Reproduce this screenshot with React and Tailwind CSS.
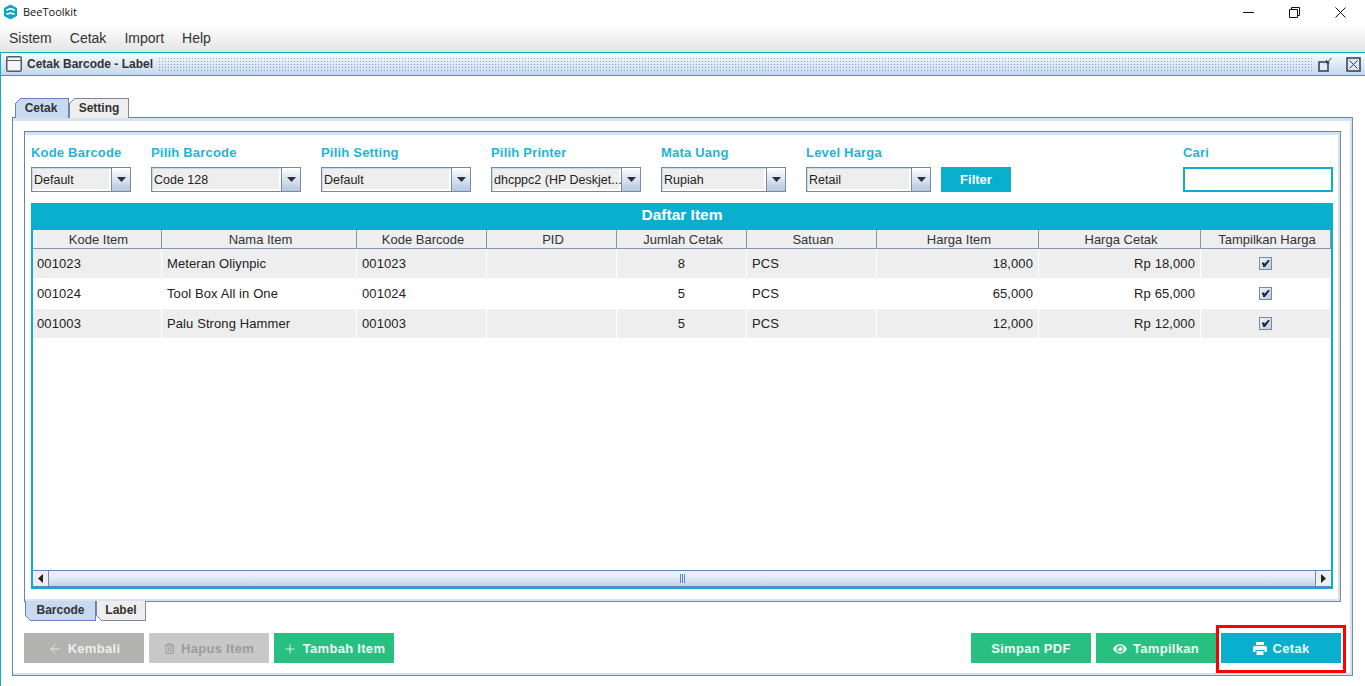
import { ArrowLeft, Plus } from 'lucide-react'
import { FaEye, FaRegTrashAlt } from 'react-icons/fa'

const filters = [
  { label: 'Kode Barcode', value: 'Default', width: 'w-[100px]' },
  { label: 'Pilih Barcode', value: 'Code 128', width: 'w-[150px]' },
  { label: 'Pilih Setting', value: 'Default', width: 'w-[150px]' },
  { label: 'Pilih Printer', value: 'dhcppc2 (HP Deskjet...', width: 'w-[150px]' },
  { label: 'Mata Uang', value: 'Rupiah', width: 'w-[125px]' },
  { label: 'Level Harga', value: 'Retail', width: 'w-[125px]' },
]

const columns = [
  ['Kode Item', 'w-[129px]'],
  ['Nama Item', 'w-[195px]'],
  ['Kode Barcode', 'w-[130px]'],
  ['PID', 'w-[130px]'],
  ['Jumlah Cetak', 'w-[130px]'],
  ['Satuan', 'w-[130px]'],
  ['Harga Item', 'w-[162px]'],
  ['Harga Cetak', 'w-[162px]'],
  ['Tampilkan Harga', 'w-[130px]'],
]

const items = [
  { kode: '001023', nama: 'Meteran Oliynpic', qty: 8, harga: '18,000' },
  { kode: '001024', nama: 'Tool Box All in One', qty: 5, harga: '65,000' },
  { kode: '001003', nama: 'Palu Strong Hammer', qty: 5, harga: '12,000' },
]

function Logo() {
  return (
    <svg width="15" height="16" viewBox="0 0 15 16">
      <path d="M7.5 0.5 L14 4 V12 L7.5 15.5 L1 12 V4 Z" fill="#12a3c4" />
      <path d="M3.5 6.6 C5.5 4.2 9.5 4.2 11.5 6.6" fill="none" stroke="#fff" strokeWidth="1.7" />
      <path d="M3.5 9.2 C5 11 6 9 7.5 9 C9 9 10 11 11.5 9.2" fill="none" stroke="#fff" strokeWidth="1.7" />
    </svg>
  )
}

function Combo({ value, width }) {
  return (
    <div className={`flex h-[25px] ${width} border border-[#7a8a9e]`}>
      <div className="flex-1 min-w-0 pl-[2px] leading-[24px] whitespace-nowrap overflow-hidden bg-[#eeeeee] text-[12.5px] text-[#222] shadow-[inset_1px_1px_0_#c8daee,inset_-2px_-2px_0_#ffffff]">{value}</div>
      <div className="flex w-[19px] items-center justify-center border-l border-[#7a8a9e] bg-gradient-to-b from-white to-[#b4c8e0]">
        <svg width="9" height="5" viewBox="0 0 9 5"><path d="M0 0 H9 L4.5 5 Z" fill="#2f2f3a" /></svg>
      </div>
    </div>
  )
}

function CheckBox() {
  return (
    <div className="mx-auto flex h-[13px] w-[13px] items-center justify-center border border-[#7a8a9e] bg-gradient-to-br from-[#eef3fa] to-[#bccfe6]">
      <svg width="9" height="9" viewBox="0 0 9 9"><path d="M1 3.5 H3.5 V5 L7 1 H8.5 V2 L4 8 H2 V6.5 L1 5 Z" fill="#222a38" /></svg>
    </div>
  )
}

function Tab({ children, active, width, bottom, extra = '' }) {
  const shape = bottom
    ? 'h-[20px] border-t-0 leading-[18px]'
    : 'h-[20px] border-b-0 leading-[19px]'
  const tone = active ? 'bg-[#c8daf0] border-[#6382bf]' : 'bg-[#eeeeee] border-[#7a8a9e]'
  const line = active ? '#6382bf' : '#7a8a9e'
  return (
    <div className={`relative ${width} ${shape} ${tone} ${extra} border text-center text-[12px] font-bold text-[#333]`}>
      {/* cut corner of the tab */}
      <svg width="6" height="6" viewBox="0 0 6 6" className={`absolute -left-px ${bottom ? '-bottom-px' : '-top-px'}`}>
        {bottom
          ? <><path d="M0 0 L6 6 H0 Z" fill="#fff" /><path d="M0 0 L6 6" stroke={line} /></>
          : <><path d="M0 6 L6 0 H0 Z" fill="#fff" /><path d="M0 6 L6 0" stroke={line} /></>}
      </svg>
      {children}
    </div>
  )
}

function ActionButton({ children, color }) {
  return (
    <button className={`flex h-[30px] w-[120px] items-center justify-center gap-[6px] pt-[1px] text-[13px] font-bold tracking-[0.3px] ${color}`}>
      {children}
    </button>
  )
}

function PrintIcon() {
  return (
    <svg width="14" height="13" viewBox="0 0 14 13" fill="currentColor">
      <path d="M3 0 H11 V3 H3 Z" />
      <path d="M1.5 4 H12.5 Q14 4 14 5.5 V10 H11.5 V8 H2.5 V10 H0 V5.5 Q0 4 1.5 4 Z" />
      <path d="M3.5 9 H10.5 V13 H3.5 Z" />
    </svg>
  )
}

export default function App() {
  return (
    <div className="flex h-[686px] w-[1365px] flex-col overflow-hidden bg-white font-['Liberation_Sans',Arial,sans-serif]">
      {/* window title */}
      <div className="flex h-[24px] items-center pl-[3px] pr-[19px]">
        <Logo />
        <span className="ml-[5px] font-['Open_Sans',sans-serif] text-[11px] text-[#111]">BeeToolkit</span>
        <div className="ml-auto flex items-center gap-[35px]">
          <svg width="11" height="11" viewBox="0 0 11 11"><path d="M0 5.5 H11" stroke="#111" /></svg>
          <svg width="11" height="11" viewBox="0 0 11 11" fill="none" stroke="#111"><path d="M0.5 2.5 H8.5 V10.5 H0.5 Z M2.5 2.5 V0.5 H10.5 V8.5 H8.5" /></svg>
          <svg width="11" height="11" viewBox="0 0 11 11" stroke="#111"><path d="M0.5 0.5 L10.5 10.5 M10.5 0.5 L0.5 10.5" /></svg>
        </div>
      </div>

      {/* menu */}
      <div className="flex h-[28px] items-center bg-gradient-to-b from-white to-[#e4e4e4] text-[14px] text-[#333]">
        <span className="ml-[9px]">Sistem</span>
        <span className="ml-[18px]">Cetak</span>
        <span className="ml-[18px]">Import</span>
        <span className="ml-[18px]">Help</span>
      </div>

      {/* internal frame */}
      <div className="flex flex-1 min-h-0 flex-col border-l border-t border-[#0bafce]">
        <div className="flex h-[23px] items-center border-b border-[#6382bf] bg-gradient-to-b from-[#f8fbfe] to-[#c4d7ee] pl-[5px] pr-[4px]">
          <svg width="16" height="16" viewBox="0 0 16 16" fill="none" className="shrink-0">
            <rect x="0.75" y="0.75" width="14.5" height="14.5" rx="1.5" fill="#f4f6fa" stroke="#555a66" strokeWidth="1.5" />
            <path d="M1 4.5 H15" stroke="#555a66" />
          </svg>
          <span className="ml-[5px] whitespace-nowrap text-[12px] font-bold text-[#333]">Cetak Barcode - Label</span>
          <div className="ml-[5px] h-[15px] flex-1 bg-[radial-gradient(#8ba3cc_0.8px,transparent_0.9px)] bg-[length:3px_3px]" />
          <div className="ml-[6px] flex items-center gap-[13px]">
            <svg width="15" height="15" viewBox="0 0 15 15" fill="none" stroke="#333a4d">
              <rect x="1" y="5" width="9" height="9" fill="#dfe8f4" strokeWidth="1.5" />
              <path d="M13.5 1 L8.5 6 M8.5 3 V6 H11.5" />
            </svg>
            <svg width="15" height="15" viewBox="0 0 15 15" fill="#dfe8f4" stroke="#333a4d">
              <rect x="1" y="1" width="13" height="13" strokeWidth="1.5" />
              <path d="M3.5 3.5 L11.5 11.5 M11.5 3.5 L3.5 11.5" />
            </svg>
          </div>
        </div>

        <div className="pl-[11px] pr-[12px] pt-[22px]">
          <div className="relative z-10 -mb-px ml-[3px] flex">
            <Tab active width="w-[54px]" extra="pr-[2px]">Cetak</Tab>
            <Tab width="w-[60px]">Setting</Tab>
          </div>

          {/* outer panel */}
          <div className="flex h-[559px] flex-col border border-[#6382bf] border-r-[#7a8a9e] border-b-[#7a8a9e] px-[11px] pt-[13px] shadow-[inset_0_3px_0_#d4e2f2,inset_-2px_-2px_0_#d4e2f2]">
            <div className="border border-[#6382bf] border-r-[#7a8a9e] border-b-[#7a8a9e] pl-[6px] pr-[7px] pb-[12px] pt-[13px] shadow-[inset_0_3px_0_#d4e2f2,inset_-2px_-2px_0_#d4e2f2]">
              <div className="flex items-end">
                <div className="flex items-end gap-[20px]">
                  {filters.map((f) => (
                    <div key={f.label}>
                      <div className="mb-[6px] h-[16px] text-[13px] font-bold leading-[16px] tracking-[0.2px] text-[#1fb4d8]">{f.label}</div>
                      <Combo value={f.value} width={f.width} />
                    </div>
                  ))}
                </div>
                <button className="ml-[10px] h-[25px] w-[70px] bg-[#0bafce] text-[13px] font-bold text-white">Filter</button>
                <div className="ml-auto w-[150px]">
                  <div className="mb-[6px] h-[16px] text-[13px] font-bold leading-[16px] tracking-[0.2px] text-[#1fb4d8]">Cari</div>
                  <input className="block h-[25px] w-full border-2 border-[#0bafce] bg-white outline-none" />
                </div>
              </div>

              {/* table */}
              <div className="mt-[11px] flex h-[386px] flex-col border-2 border-t-0 border-[#0bafce]">
                <div className="h-[27px] bg-[#0bafce] text-center text-[15.5px] font-bold leading-[24px] text-white">Daftar Item</div>
                <div className="min-h-0 flex-1 bg-white">
                  <table className="w-[1298px] table-fixed border-separate border-spacing-0 text-[13px] leading-[16px] tracking-[0.1px] text-[#222]">
                    <thead>
                      <tr>
                        {columns.map(([name, w]) => (
                          <th key={name} className={`${w} h-[19px] border-b border-r border-[#8696ab] bg-[#eeeeee] p-0 pl-[3px] pt-[1px] text-center font-normal tracking-normal text-[#333]`}>{name}</th>
                        ))}
                      </tr>
                    </thead>
                    <tbody>
                      {items.map((it, i) => {
                        const cell = `h-[30px] border-b border-r border-white p-0 px-[5px] ${i % 2 === 0 ? 'bg-[#eeeeee]' : 'bg-white'}`
                        return (
                          <tr key={it.kode}>
                            <td className={`${cell} pl-[4px]`}>{it.kode}</td>
                            <td className={cell}>{it.nama}</td>
                            <td className={cell}>{it.kode}</td>
                            <td className={cell}></td>
                            <td className={`${cell} text-center`}>{it.qty}</td>
                            <td className={cell}>PCS</td>
                            <td className={`${cell} text-right`}>{it.harga}</td>
                            <td className={`${cell} text-right`}>Rp {it.harga}</td>
                            <td className={cell}><CheckBox /></td>
                          </tr>
                        )
                      })}
                    </tbody>
                  </table>
                </div>

                {/* scrollbar */}
                <div className="flex h-[17px] border-y border-[#6382bf] bg-white">
                  <div className="flex w-[16px] items-center justify-center border-r border-[#7a8a9e] bg-[#eeeeee]">
                    <svg width="5" height="9" viewBox="0 0 5 9"><path d="M5 0 V9 L0 4.5 Z" fill="#222" /></svg>
                  </div>
                  <div className="flex flex-1 items-center justify-center gap-[1px] bg-gradient-to-b from-[#eef3fa] via-[#dfe9f5] to-[#c2d2e7]">
                    <span className="h-[9px] w-[1px] bg-[#6382bf]" />
                    <span className="h-[9px] w-[1px] bg-[#6382bf]" />
                    <span className="h-[9px] w-[1px] bg-[#6382bf]" />
                  </div>
                  <div className="flex w-[16px] items-center justify-center border-l border-[#7a8a9e] bg-[#eeeeee]">
                    <svg width="5" height="9" viewBox="0 0 5 9"><path d="M0 0 V9 L5 4.5 Z" fill="#222" /></svg>
                  </div>
                </div>
              </div>
            </div>

            <div className="relative z-10 -mt-px ml-[1px] flex">
              <Tab bottom active width="w-[71px]">Barcode</Tab>
              <Tab bottom width="w-[50px]">Label</Tab>
            </div>

            {/* actions */}
            <div className="mt-[12px] flex items-center gap-[5px]">
              <ActionButton color="bg-[#b3b3b1] text-[#eeeeee]"><ArrowLeft size={14} strokeWidth={1.5} />Kembali</ActionButton>
              <ActionButton color="bg-[#c8c8c8] text-[#9c9c9c]"><FaRegTrashAlt size={11} />Hapus Item</ActionButton>
              <ActionButton color="bg-[#28c081] text-[#eefaf4]"><Plus size={14} strokeWidth={1.5} />Tambah Item</ActionButton>
              <div className="ml-auto flex items-center gap-[5px]">
                <ActionButton color="bg-[#28c081] text-[#eefaf4]">Simpan PDF</ActionButton>
                <ActionButton color="bg-[#28c081] text-[#eefaf4]"><FaEye size={14} />Tampilkan</ActionButton>
                <div className="relative">
                  <ActionButton color="bg-[#0bafce] text-[#eefaf4]"><PrintIcon />Cetak</ActionButton>
                  <div className="pointer-events-none absolute -bottom-[10px] -left-[5px] -right-[5px] -top-[8px] border-[3px] border-[#ff0000]" />
                </div>
              </div>
            </div>
          </div>
        </div>
      </div>
    </div>
  )
}
